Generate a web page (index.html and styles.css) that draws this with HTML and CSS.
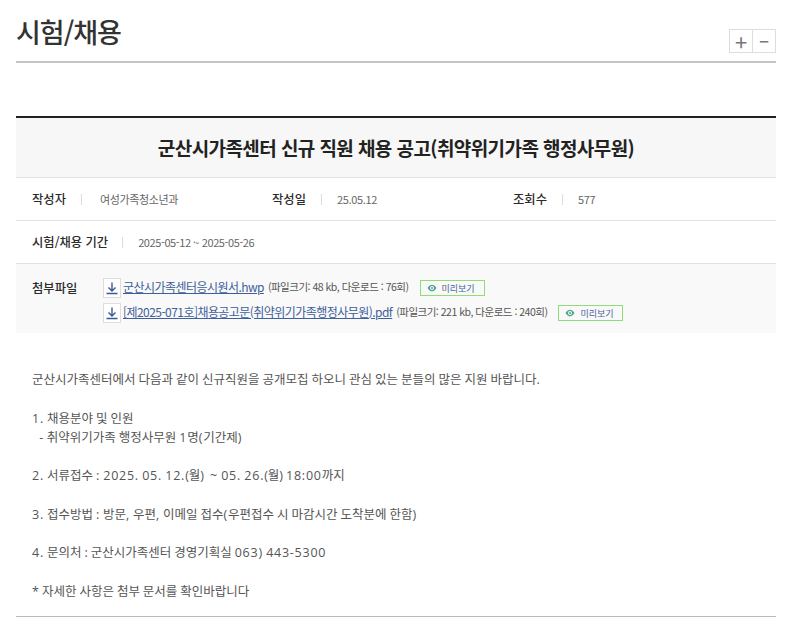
FILE: index.html
```html
<!DOCTYPE html>
<html lang="ko">
<head>
<meta charset="utf-8">
<title>시험/채용</title>
<link rel="stylesheet" href="styles.css">
</head>
<body>
<main class="page">
  <header class="page-head">
    <h1 class="page-title">시험/채용</h1>
    <div class="zoom">
      <button class="zoom-btn" type="button">+</button>
      <button class="zoom-btn zoom-minus" type="button">−</button>
    </div>
  </header>
  <article class="post">
    <h2 class="post-title">군산시가족센터 신규 직원 채용 공고(취약위기가족 행정사무원)</h2>
    <div class="meta-row">
      <div class="meta meta-a"><strong class="label">작성자</strong><span class="value value-text">여성가족청소년과</span></div>
      <div class="meta meta-b"><strong class="label">작성일</strong><span class="value">25.05.12</span></div>
      <div class="meta"><strong class="label">조회수</strong><span class="value">577</span></div>
    </div>
    <div class="meta-row">
      <div class="meta"><strong class="label">시험/채용 기간</strong><span class="value value-wide">2025-05-12 ~ 2025-05-26</span></div>
    </div>
    <div class="files">
      <strong class="files-label">첨부파일</strong>
      <ul class="file-list">
        <li class="file">
          <span class="dl"><svg width="14" height="14" viewBox="0 0 14 14" fill="none" stroke="#3b5a94" stroke-width="1.4"><path d="M7 1.5V9.5M3.5 6.5L7 10L10.5 6.5M1.5 12.5H12.5"/></svg></span>
          <a class="file-name" href="#">군산시가족센터응시원서.hwp</a>
          <span class="file-info">(파일크기: 48 kb, 다운로드 : 76회)</span>
          <a class="preview" href="#"><svg width="10" height="8" viewBox="0 0 10 8"><path d="M0.5 4C2 1.5 3.5 0.7 5 0.7S8 1.5 9.5 4C8 6.5 6.5 7.3 5 7.3S2 6.5 0.5 4Z" fill="#4fa58f"/><circle cx="5" cy="4" r="2" fill="#f9f9f9"/><circle cx="5" cy="4" r="1" fill="#4fa58f"/></svg>미리보기</a>
        </li>
        <li class="file">
          <span class="dl"><svg width="14" height="14" viewBox="0 0 14 14" fill="none" stroke="#3b5a94" stroke-width="1.4"><path d="M7 1.5V9.5M3.5 6.5L7 10L10.5 6.5M1.5 12.5H12.5"/></svg></span>
          <a class="file-name" href="#">[제2025-071호]채용공고문(취약위기가족행정사무원).pdf</a>
          <span class="file-info">(파일크기: 221 kb, 다운로드 : 240회)</span>
          <a class="preview" href="#"><svg width="10" height="8" viewBox="0 0 10 8"><path d="M0.5 4C2 1.5 3.5 0.7 5 0.7S8 1.5 9.5 4C8 6.5 6.5 7.3 5 7.3S2 6.5 0.5 4Z" fill="#4fa58f"/><circle cx="5" cy="4" r="2" fill="#f9f9f9"/><circle cx="5" cy="4" r="1" fill="#4fa58f"/></svg>미리보기</a>
        </li>
      </ul>
    </div>
    <div class="body-text">
      <p>군산시가족센터에서 다음과 같이 신규직원을 공개모집 하오니 관심 있는 분들의 많은 지원 바랍니다.</p>
      <p><span class="num">1.</span> 채용분야 및 인원<br><span class="indent">&nbsp; -</span> 취약위기가족 행정사무원 <span class="num">1</span>명<span class="num">(</span>기간제<span class="num">)</span></p>
      <p><span class="num">2.</span> 서류접수 <span class="num">: 2025. 05. 12.</span>(월) &nbsp;<span class="num">~ 05. 26.</span>(월) <span class="num">18:00</span>까지</p>
      <p><span class="num">3.</span> 접수방법 <span class="num">:</span> 방문<span class="num">,</span> 우편<span class="num">,</span> 이메일 접수<span class="num">(</span>우편접수 시 마감시간 도착분에 한함<span class="num">)</span></p>
      <p><span class="num">4.</span> 문의처 : 군산시가족센터 경영기획실 <span class="num">063) 443-5300</span></p>
      <p>* 자세한 사항은 첨부 문서를 확인바랍니다</p>
    </div>
  </article>
</main>
</body>
</html>
```

FILE: styles.css
```css
* { box-sizing: border-box; }
html, body { margin: 0; padding: 0; background: #fff; }
body {
  font-family: "Noto Sans CJK KR", "Noto Sans", sans-serif;
  color: #444;
  font-size: 13px;
}
.page { padding: 0 24px 0 16px; }
.page-head {
  height: 63px;
  border-bottom: 2px solid #c4c4c4;
  display: flex;
  justify-content: space-between;
}
.page-title {
  margin: 0;
  font-size: 27px;
  font-weight: 500;
  color: #333;
  line-height: 34px;
  padding-top: 15px;
  letter-spacing: -1px;
}
.zoom { display: flex; align-items: flex-start; padding-top: 29px; }
.zoom-btn {
  width: 24px;
  height: 24px;
  padding: 0;
  border: 1px solid #ddd;
  background: #fff;
  color: #777;
  font-family: "Noto Sans CJK KR", sans-serif;
  font-size: 22px;
  font-weight: 400;
  line-height: 20px;
}
.zoom-minus { margin-left: -1px; font-size: 17px; font-weight: 500; }
.post { margin-top: 53px; border-top: 2px solid #222; border-bottom: 1px solid #bbb; }
.post-title {
  margin: 0;
  height: 60px;
  background: #f7f7f7;
  border-bottom: 1px solid #e2e2e2;
  font-size: 19px;
  font-weight: 700;
  color: #222;
  text-align: center;
  line-height: 59px;
  letter-spacing: -0.58px;
}
.meta-row {
  display: flex;
  align-items: center;
  height: 43px;
  padding-left: 16px;
  border-bottom: 1px solid #e2e2e2;
}
.meta { display: flex; align-items: center; }
.meta-a { width: 240px; }
.meta-b { width: 241px; }
.label { font-size: 12.3px; font-weight: 500; color: #2b2b2b; }
.value {
  font-size: 11px;
  color: #666;
  margin-left: 15px;
  padding-left: 16px;
  position: relative;
  letter-spacing: -0.35px;
}
.value::before {
  content: "";
  position: absolute;
  left: 0;
  top: 3px;
  height: 11px;
  width: 1px;
  background: #ddd;
}
.value-text { padding-left: 19px; }
.value-wide { letter-spacing: -0.4px; margin-left: 14px; }
.files {
  display: flex;
  background: #f9f9f9;
  padding: 11px 0 10px 16px;
  height: 69px;
}
.files-label { width: 71px; font-size: 12.3px; font-weight: 500; color: #2b2b2b; padding-top: 4px; line-height: 19px; }
.file-list { list-style: none; margin: 0; padding: 0; }
.file { display: flex; align-items: center; height: 25px; }
.dl {
  width: 18px;
  height: 20px;
  border: 1px solid #ddd;
  background: #fff;
  display: flex;
  align-items: center;
  justify-content: center;
  margin-right: 2px;
}
.file-name { color: #3f5f99; font-size: 12px; text-decoration: underline; letter-spacing: -0.55px; margin-bottom: 2px; }
.file-info { font-size: 10.5px; color: #555; margin-left: 4px; letter-spacing: -0.5px; margin-bottom: 2px; }
.preview {
  width: 65px;
  height: 16px;
  margin-left: 11px;
  border: 1px solid #8edc7a;
  display: flex;
  align-items: center;
  gap: 5px;
  padding: 1px 0 0 6px;
  font-size: 9px;
  color: #47649a;
  text-decoration: none;
}
.body-text {
  padding: 37px 16px 15px;
  font-family: "Open Sans", "Noto Sans CJK KR", sans-serif;
  font-size: 12.5px;
  line-height: 19.25px;
  color: #555;
  word-spacing: -0.25px;
}
.body-text p { margin: 0 0 19.25px; }
.body-text p:last-child { margin-bottom: 0; }
.num { letter-spacing: 0.75px; word-spacing: -0.7px; }
.indent { letter-spacing: 0.6px; }
```
